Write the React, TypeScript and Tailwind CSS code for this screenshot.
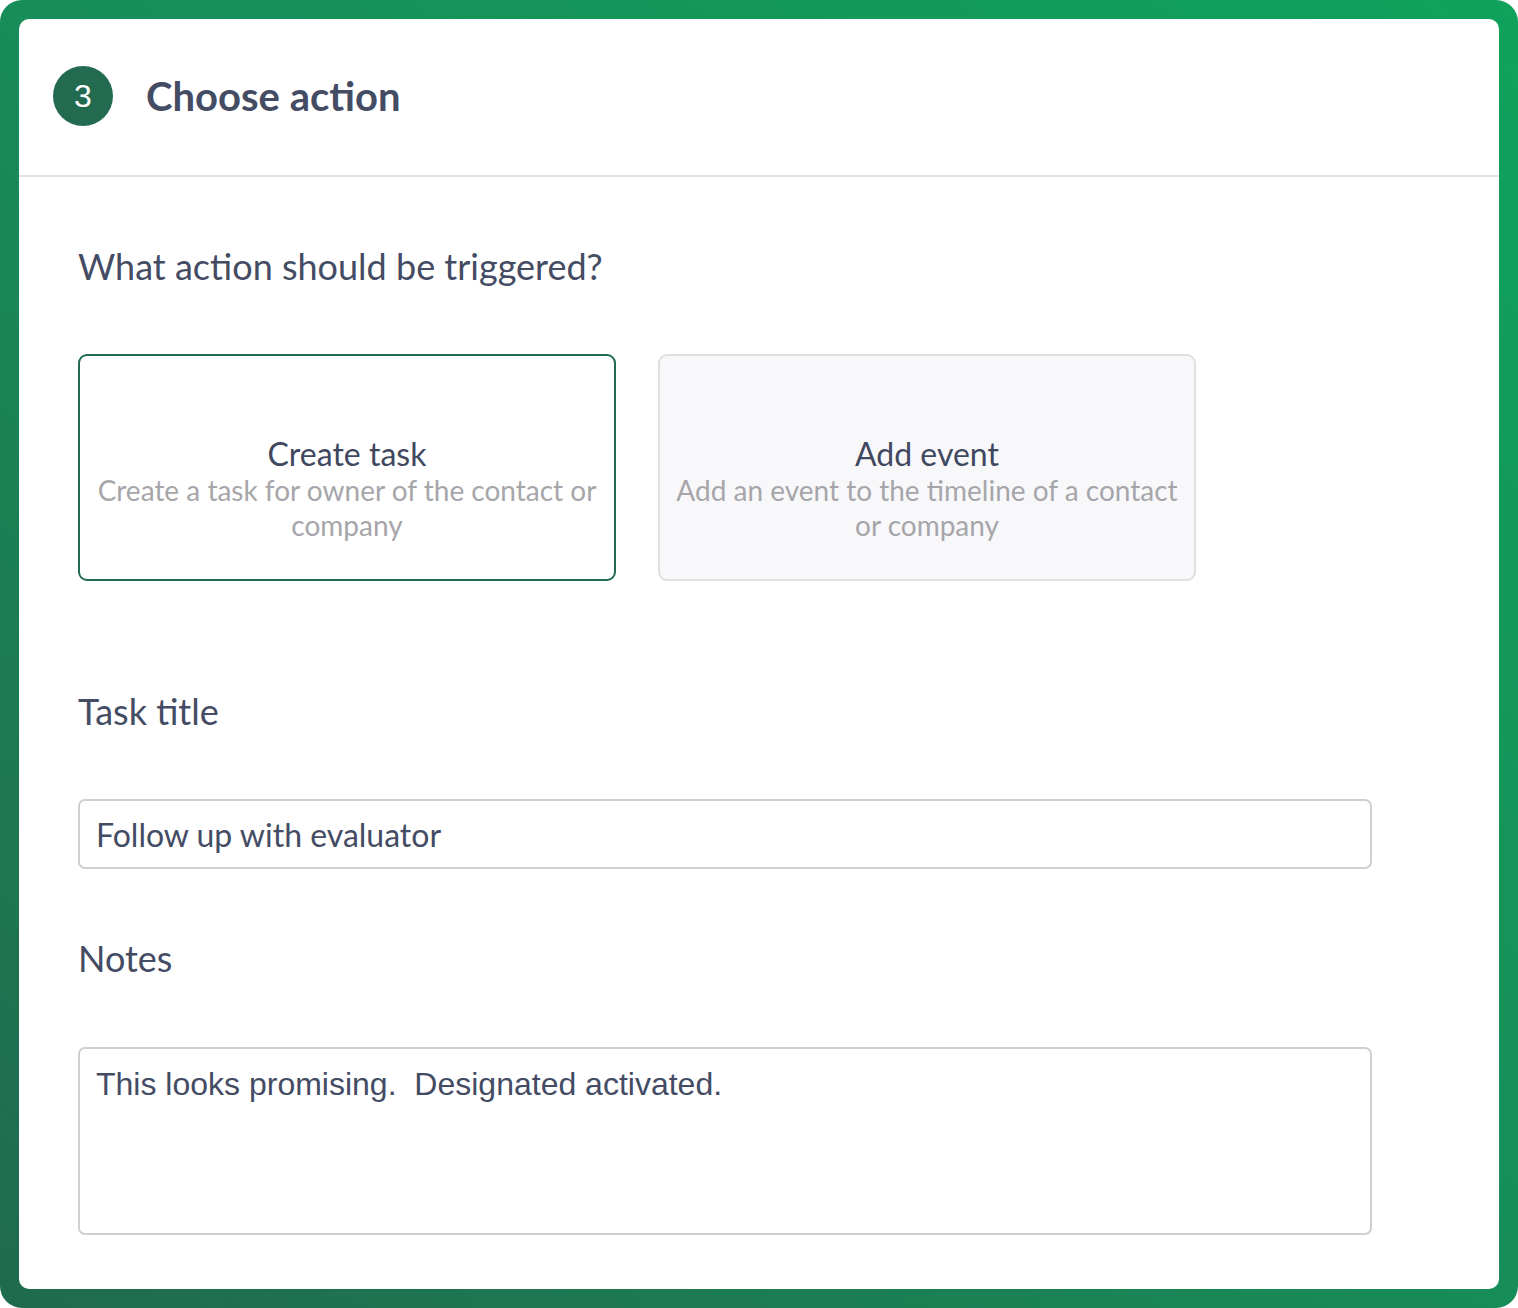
import React from "react";

const ActionCard = ({
  title,
  description,
  selected,
}: {
  title: string;
  description: string;
  selected?: boolean;
}) => {
  return (
    <div
      className={`w-[538px] h-[227px] rounded-[9px] border-2 flex flex-col items-center justify-center px-[10px] pt-[42px] text-center ${
        selected ? "border-[#226b50] bg-white" : "border-[#e0e0e3] bg-[#f8f8fa]"
      }`}
    >
      <div className="text-[32px] leading-[38px] text-[#404860]">{title}</div>
      <div className="text-[28px] leading-[35px] text-[#a6a6aa]">{description}</div>
    </div>
  );
};

export default function App() {
  return (
    <div
      className="w-[1518px] h-[1308px] rounded-[22px] p-[19px] bg-gradient-to-tr from-[#1f6a4e] via-[#178d58] to-[#0fa25b]"
      style={{ fontFamily: "Lato, 'Noto Sans', sans-serif" }}
    >
      <div className="w-full h-full bg-white rounded-[10px] flex flex-col overflow-hidden">
        {/* Header */}
        <div className="h-[158px] flex items-center pl-[34px] gap-[33px] border-b-2 border-[#e2e2e4]">
          <div
            className="w-[60px] h-[60px] rounded-full bg-[#236b50] text-white flex items-center justify-center text-[32px] -mt-[2px]"
            style={{ fontFamily: "'Liberation Sans', Arial, sans-serif" }}
          >
            3
          </div>
          <h1 className="text-[40px] leading-[48px] font-bold text-[#444c64] -mt-[2px]">Choose action</h1>
        </div>

        {/* Body */}
        <div className="px-[59px] pt-[67px] flex flex-col">
          <h2 className="text-[36px] leading-[44px] text-[#444c64]">What action should be triggered?</h2>

          <div className="flex gap-[42px] mt-[66px]">
            <ActionCard
              selected
              title="Create task"
              description="Create a task for owner of the contact or company"
            />
            <ActionCard
              title="Add event"
              description="Add an event to the timeline of a contact or company"
            />
          </div>

          <label className="mt-[108px] text-[36px] leading-[44px] text-[#444c64]">Task title</label>
          <input
            type="text"
            defaultValue="Follow up with evaluator"
            className="mt-[66px] w-[1294px] h-[70px] rounded-[7px] border-2 border-[#cfcfd2] px-4 text-[32px] text-[#444c64] outline-none"
            style={{ fontFamily: "Lato, 'Noto Sans', sans-serif" }}
          />

          <label className="mt-[67px] text-[36px] leading-[44px] text-[#444c64]">Notes</label>
          <textarea
            defaultValue="This looks promising.  Designated activated."
            className="mt-[67px] w-[1294px] h-[188px] rounded-[7px] border-2 border-[#cfcfd2] px-4 py-[11px] text-[32px] text-[#444c64] outline-none resize-none"
            style={{ fontFamily: "'Liberation Sans', Arial, sans-serif" }}
          />
        </div>
      </div>
    </div>
  );
}
